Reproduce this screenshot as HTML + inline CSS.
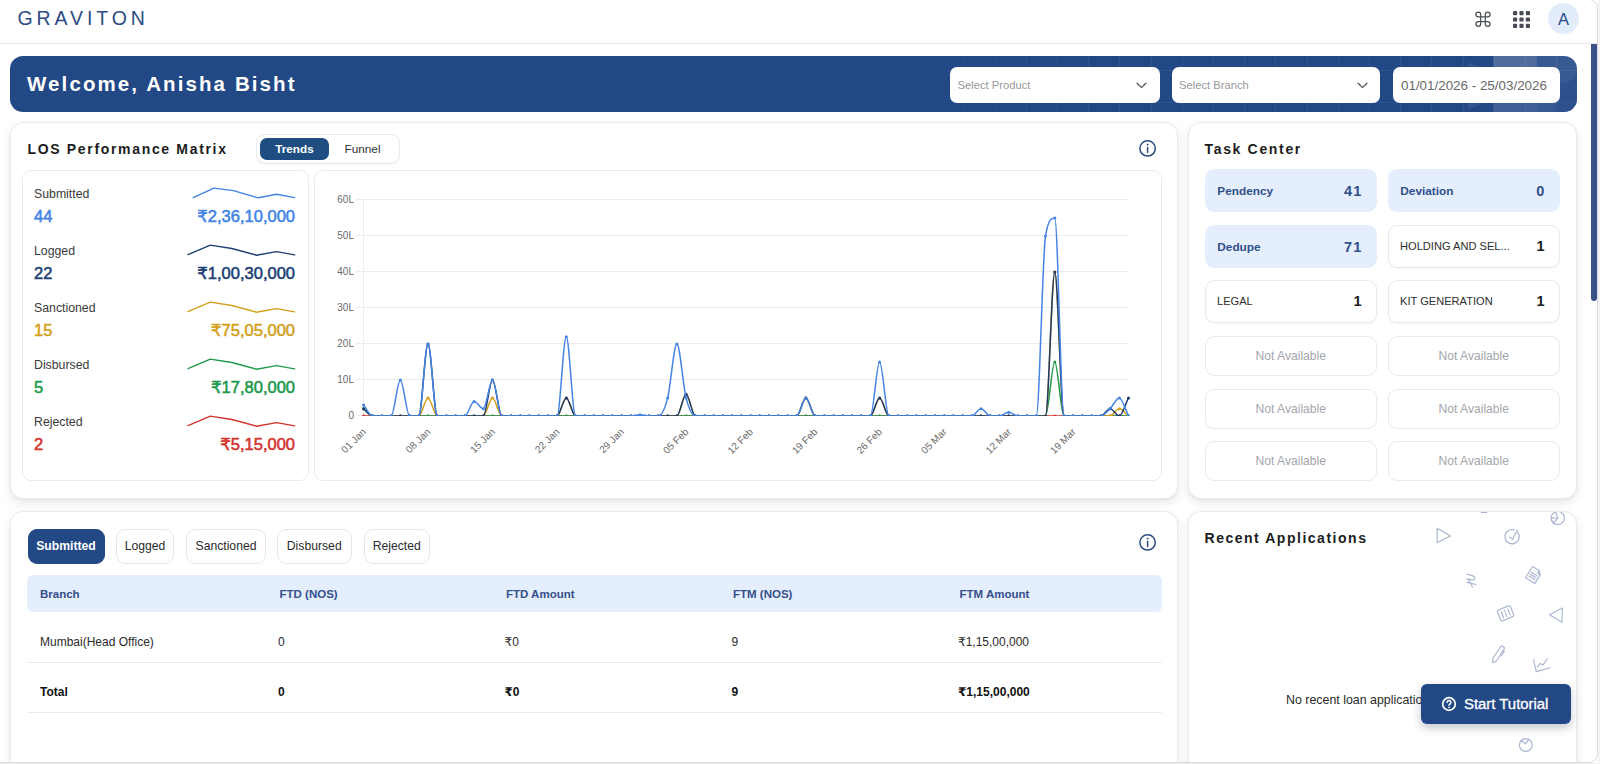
<!DOCTYPE html>
<html lang="en">
<head>
<meta charset="utf-8">
<title>Graviton Dashboard</title>
<style>
*{box-sizing:border-box;margin:0;padding:0}
html,body{width:1600px;height:764px;overflow:hidden;background:#fff;font-family:"Liberation Sans","DejaVu Sans",sans-serif;color:#222;}
.abs{position:absolute}
.rs{font-family:"DejaVu Sans",sans-serif;}
#hdr{position:absolute;left:0;top:0;width:1598px;height:44px;background:#fff;border-bottom:1px solid #e8e8ea}
#logo{position:absolute;left:17.5px;top:6px;font-size:19.5px;line-height:24px;letter-spacing:3.9px;color:#2b4c82;font-weight:400;white-space:nowrap}
#avatar{position:absolute;left:1548px;top:3px;width:31px;height:31px;border-radius:50%;background:#e3ecfb;color:#2a4a85;font-size:16.5px;line-height:33.6px;text-align:center}
#banner{position:absolute;left:10px;top:56px;width:1567px;height:56px;border-radius:13px;background:#224886;overflow:hidden}
#banner h1{position:absolute;left:17px;top:15px;font-size:20.5px;line-height:26px;font-weight:700;color:#fff;letter-spacing:2.1px;white-space:nowrap}
.sel{position:absolute;top:11px;height:36px;background:#fff;border-radius:7px;font-size:11.2px;color:#989898;line-height:37.4px;padding-left:7.6px;white-space:nowrap}
.card{position:absolute;background:#fff;border:1px solid #eaebee;border-radius:13px;box-shadow:0 4px 10px rgba(30,40,60,.10),0 1px 2px rgba(30,40,60,.05)}
.ttl{position:absolute;font-size:14px;line-height:18px;font-weight:700;letter-spacing:1.67px;color:#1c1c1c;white-space:nowrap}
.box{position:absolute;border:1px solid #e8eaee;border-radius:9px;background:#fff}
.lab{position:absolute;left:34px;font-size:12.3px;line-height:16px;color:#3a3a3a;white-space:nowrap}
.num{position:absolute;left:34px;font-size:16.5px;line-height:20px;font-weight:400;-webkit-text-stroke:.55px currentColor;white-space:nowrap}
.amt{position:absolute;right:1305px;font-size:16.5px;line-height:20px;font-weight:400;-webkit-text-stroke:.55px currentColor;white-space:nowrap;text-align:right}
.c1{color:#4384e4}.c2{color:#213f75}.c3{color:#d2a11c}.c4{color:#219a4c}.c5{color:#d3342c}
.tk{position:absolute;width:171.5px;height:43px;border-radius:9px;font-size:11.8px;line-height:43px;white-space:nowrap}
.tk.b{background:#e5eefd;color:#2f4e8a;font-weight:700;line-height:44.6px}
.tk.w{background:#fff;border:1px solid #e9eaed;color:#2e2e2e;font-size:11.1px;box-shadow:0 1px 2px rgba(0,0,0,.04)}
.tk.n{background:#fff;border:1px solid #e9eaed;color:#a3a6ab;text-align:center;height:40px;line-height:38px;font-size:12.1px}
.tk span.l{position:absolute;left:12.3px}
.tk span.r{position:absolute;right:14px;font-size:14.5px;font-weight:700;letter-spacing:1.2px}
.tk.w span.l{left:11px;top:-1px}.tk.w span.r{right:14px;top:-1px;color:#1c1c1c;letter-spacing:0}
.tab{position:absolute;top:529px;height:34.5px;border:1px solid #e6e8ec;border-radius:9px;font-size:12.2px;line-height:32.5px;text-align:center;color:#2b2b2b;background:#fff;white-space:nowrap}
.tab.on{background:#224886;border-color:#224886;color:#fff;font-weight:700}
.th{position:absolute;top:586px;font-size:11.5px;line-height:16px;font-weight:700;color:#34508a;white-space:nowrap}
.td{position:absolute;font-size:12px;line-height:16px;color:#2a2a2a;white-space:nowrap}
.td.b{font-weight:700;color:#111}
</style>
</head>
<body>
<!-- ===== header ===== -->
<div id="hdr">
  <div id="logo">GRAVITON</div>
  <svg class="abs" style="left:1474px;top:10px" width="18" height="18" viewBox="0 0 18 18" fill="none" stroke="#4a4e57" stroke-width="1.25">
    <path d="M6.7 6.9h4.6v4.6H6.700zM6.700 6.900V4.500a2.400 2.400 0 1 0-2.400 2.400zM11.300 6.900h2.400a2.400 2.400 0 1 0-2.400-2.400zM11.300 11.500v2.400a2.400 2.400 0 1 0 2.400-2.400zM6.700 11.500H4.300a2.400 2.400 0 1 0 2.400 2.400z"/>
  </svg>
  <svg class="abs" style="left:1512.8px;top:10.8px" width="17" height="17" viewBox="0 0 18 18" fill="#474b55">
    <rect x="0" y="0" width="4.4" height="4.4" rx="1"/><rect x="6.8" y="0" width="4.4" height="4.4" rx="1"/><rect x="13.6" y="0" width="4.4" height="4.4" rx="1"/>
    <rect x="0" y="6.8" width="4.4" height="4.4" rx="1"/><rect x="6.8" y="6.8" width="4.4" height="4.4" rx="1"/><rect x="13.6" y="6.8" width="4.4" height="4.4" rx="1"/>
    <rect x="0" y="13.6" width="4.4" height="4.4" rx="1"/><rect x="6.8" y="13.6" width="4.4" height="4.4" rx="1"/><rect x="13.6" y="13.6" width="4.4" height="4.4" rx="1"/>
  </svg>
  <div id="avatar">A</div>
</div>

<!-- ===== banner ===== -->
<div id="banner">
  <div class="abs" style="left:892.4px;top:0;width:690px;height:56px;opacity:.07;background:repeating-linear-gradient(90deg,transparent 0,transparent 30.2px,#fff 30.2px,#fff 31.2px),repeating-linear-gradient(180deg,transparent 0,transparent 14.4px,#fff 14.4px,#fff 15.4px,transparent 15.4px,transparent 45.8px,#fff 45.8px,#fff 46.8px,transparent 46.8px,transparent 60px);-webkit-mask-image:linear-gradient(90deg,transparent 0,#000 25%);mask-image:linear-gradient(90deg,transparent 0,#000 25%)"></div>
  <svg class="abs" style="left:1440px;top:0" width="127" height="56" viewBox="0 0 127 56">
    <path d="M18 6 L44 18 L44 42 L18 54 Z" fill="#fff" opacity=".07"/>
    <rect x="43.5" y="0" width="43.5" height="56" fill="#fff" opacity=".2"/>
    <rect x="43.5" y="28" width="43.5" height="28" fill="#224886" opacity=".35"/>
    <rect x="87" y="0" width="40" height="56" fill="#fff" opacity=".1"/>
    <path d="M110 28 Q127 26 127 12 L127 56 L104 56 Z" fill="#224886" opacity=".45"/>
  </svg>
  <h1>Welcome, Anisha Bisht</h1>
  <div class="sel" style="left:940px;width:209.5px">Select Product
    <svg class="abs" style="left:185.5px;top:14.5px" width="11" height="7.3" viewBox="0 0 12 8" fill="none" stroke="#555" stroke-width="1.4" stroke-linecap="round" stroke-linejoin="round"><path d="M1.2 1.4 6 6.2 10.8 1.4"/></svg>
  </div>
  <div class="sel" style="left:1161.5px;width:208.5px">Select Branch
    <svg class="abs" style="left:185px;top:14.5px" width="11" height="7.3" viewBox="0 0 12 8" fill="none" stroke="#555" stroke-width="1.4" stroke-linecap="round" stroke-linejoin="round"><path d="M1.2 1.4 6 6.2 10.8 1.4"/></svg>
  </div>
  <div class="sel" style="left:1382.5px;width:167.5px;font-size:13.4px;color:#686868;padding-left:8.5px;line-height:38px">01/01/2026 - 25/03/2026</div>
</div>

<!-- ===== LOS Performance Matrix ===== -->
<div class="card" style="left:10px;top:122px;width:1168px;height:376.6px"></div>
<div class="ttl" style="left:27.5px;top:140px">LOS Performance Matrix</div>
<div class="abs" style="left:256px;top:134px;width:144px;height:30px;border:1px solid #e8eaee;border-radius:9px;background:#fff;box-shadow:0 1px 2px rgba(0,0,0,.04)"></div>
<div class="abs" style="left:260px;top:138px;width:69px;height:22px;border-radius:7px;background:#1f4d82;color:#fff;font-weight:700;font-size:11.7px;line-height:22px;text-align:center">Trends</div>
<div class="abs" style="left:329px;top:138px;width:67px;height:22px;font-size:11.8px;line-height:22px;text-align:center;color:#333">Funnel</div>
<svg class="abs" style="left:1138px;top:139px" width="19" height="19" viewBox="0 0 19 19" fill="none" stroke="#2d4b82" stroke-width="1.5"><circle cx="9.6" cy="9.4" r="7.7"/><path d="M9.6 8.4v5" stroke-linecap="round"/><circle cx="9.6" cy="5.7" r=".6" fill="#2d4b82" stroke-width=".8"/></svg>

<div class="box" style="left:22px;top:169.5px;width:286.5px;height:311px"></div>
<div class="box" style="left:314px;top:169.5px;width:847.5px;height:311px"></div>

<div class="lab" style="top:186px">Submitted</div><div class="num c1" style="top:206px">44</div><div class="amt c1" style="top:206px"><span class="rs">₹</span>2,36,10,000</div>
<div class="lab" style="top:243px">Logged</div><div class="num c2" style="top:263px">22</div><div class="amt c2" style="top:263px"><span class="rs">₹</span>1,00,30,000</div>
<div class="lab" style="top:300px">Sanctioned</div><div class="num c3" style="top:320px">15</div><div class="amt c3" style="top:320px"><span class="rs">₹</span>75,05,000</div>
<div class="lab" style="top:357px">Disbursed</div><div class="num c4" style="top:377px">5</div><div class="amt c4" style="top:377px"><span class="rs">₹</span>17,80,000</div>
<div class="lab" style="top:414px">Rejected</div><div class="num c5" style="top:434px">2</div><div class="amt c5" style="top:434px"><span class="rs">₹</span>5,15,000</div>

<svg class="abs" style="left:180px;top:180px" width="125" height="260" viewBox="180 180 125 260" fill="none" stroke-width="1.4" stroke-linejoin="round" stroke-linecap="round">
  <polyline stroke="#4384e4" points="193.3,197.6 213.9,188.1 233.4,190.6 258.1,197.8 276.6,194.2 294.6,197.6"/>
  <polyline stroke="#213f75" points="188,254.6 210.3,245.1 231.9,248.5 256.4,255.2 276.6,251.6 294.6,254.9"/>
  <polyline stroke="#d2a11c" points="188,311.6 210.3,302.1 231.9,305.5 256.4,312.2 276.6,308.6 294.6,311.9"/>
  <polyline stroke="#219a4c" points="188,368.6 210.3,359.1 231.9,362.5 256.4,369.2 276.6,365.6 294.6,368.9"/>
  <polyline stroke="#d3342c" points="188,425.6 210.3,416.1 231.9,419.5 256.4,426.2 276.6,422.6 294.6,425.9"/>
</svg>

<svg class="abs" style="left:314px;top:170px" width="848" height="311" viewBox="314 170 848 311" font-family="Liberation Sans, sans-serif" font-size="10" fill="#6a6a6a"><defs><clipPath id="ca"><rect x="355" y="190" width="790" height="226.05"/></clipPath></defs>
<g stroke="#ececec" stroke-width="1" fill="none"><path d="M357 415.5H1128.5"/><path d="M357 379.5H1128.5"/><path d="M357 343.5H1128.5"/><path d="M357 307.5H1128.5"/><path d="M357 271.5H1128.5"/><path d="M357 235.5H1128.5"/><path d="M357 199.5H1128.5"/><path d="M363.5 199.5V415.5"/></g>
<text x="354" y="419.1" text-anchor="end">0</text>
<text x="354" y="383.1" text-anchor="end">10L</text>
<text x="354" y="347.1" text-anchor="end">20L</text>
<text x="354" y="311.1" text-anchor="end">30L</text>
<text x="354" y="275.1" text-anchor="end">40L</text>
<text x="354" y="239.1" text-anchor="end">50L</text>
<text x="354" y="203.1" text-anchor="end">60L</text>
<text text-anchor="end" transform="translate(364.1 430) rotate(-45)" x="0" y="3.5">01 Jan</text>
<text text-anchor="end" transform="translate(428.6 430) rotate(-45)" x="0" y="3.5">08 Jan</text>
<text text-anchor="end" transform="translate(493.1 430) rotate(-45)" x="0" y="3.5">15 Jan</text>
<text text-anchor="end" transform="translate(557.7 430) rotate(-45)" x="0" y="3.5">22 Jan</text>
<text text-anchor="end" transform="translate(622.2 430) rotate(-45)" x="0" y="3.5">29 Jan</text>
<text text-anchor="end" transform="translate(686.7 430) rotate(-45)" x="0" y="3.5">05 Feb</text>
<text text-anchor="end" transform="translate(751.2 430) rotate(-45)" x="0" y="3.5">12 Feb</text>
<text text-anchor="end" transform="translate(815.7 430) rotate(-45)" x="0" y="3.5">19 Feb</text>
<text text-anchor="end" transform="translate(880.2 430) rotate(-45)" x="0" y="3.5">26 Feb</text>
<text text-anchor="end" transform="translate(944.8 430) rotate(-45)" x="0" y="3.5">05 Mar</text>
<text text-anchor="end" transform="translate(1009.3 430) rotate(-45)" x="0" y="3.5">12 Mar</text>
<text text-anchor="end" transform="translate(1073.8 430) rotate(-45)" x="0" y="3.5">19 Mar</text>
<g clip-path="url(#ca)">
<path d="M363.5 415.9H1128.5" fill="none" stroke="#d3342c" stroke-width="1.5" stroke-linejoin="round"/>
<g fill="#d3342c"><circle cx="363.5" cy="415.9" r="1.5"/><circle cx="372.7" cy="415.9" r="1.5"/><circle cx="381.9" cy="415.9" r="1.5"/><circle cx="391.2" cy="415.9" r="1.5"/><circle cx="400.4" cy="415.9" r="1.5"/><circle cx="409.6" cy="415.9" r="1.5"/><circle cx="418.8" cy="415.9" r="1.5"/><circle cx="428.0" cy="415.9" r="1.5"/><circle cx="437.2" cy="415.9" r="1.5"/><circle cx="446.5" cy="415.9" r="1.5"/><circle cx="455.7" cy="415.9" r="1.5"/><circle cx="464.9" cy="415.9" r="1.5"/><circle cx="474.1" cy="415.9" r="1.5"/><circle cx="483.3" cy="415.9" r="1.5"/><circle cx="492.5" cy="415.9" r="1.5"/><circle cx="501.8" cy="415.9" r="1.5"/><circle cx="511.0" cy="415.9" r="1.5"/><circle cx="520.2" cy="415.9" r="1.5"/><circle cx="529.4" cy="415.9" r="1.5"/><circle cx="538.6" cy="415.9" r="1.5"/><circle cx="547.8" cy="415.9" r="1.5"/><circle cx="557.1" cy="415.9" r="1.5"/><circle cx="566.3" cy="415.9" r="1.5"/><circle cx="575.5" cy="415.9" r="1.5"/><circle cx="584.7" cy="415.9" r="1.5"/><circle cx="593.9" cy="415.9" r="1.5"/><circle cx="603.1" cy="415.9" r="1.5"/><circle cx="612.4" cy="415.9" r="1.5"/><circle cx="621.6" cy="415.9" r="1.5"/><circle cx="630.8" cy="415.9" r="1.5"/><circle cx="640.0" cy="415.9" r="1.5"/><circle cx="649.2" cy="415.9" r="1.5"/><circle cx="658.4" cy="415.9" r="1.5"/><circle cx="667.7" cy="415.9" r="1.5"/><circle cx="676.9" cy="415.9" r="1.5"/><circle cx="686.1" cy="415.9" r="1.5"/><circle cx="695.3" cy="415.9" r="1.5"/><circle cx="704.5" cy="415.9" r="1.5"/><circle cx="713.7" cy="415.9" r="1.5"/><circle cx="723.0" cy="415.9" r="1.5"/><circle cx="732.2" cy="415.9" r="1.5"/><circle cx="741.4" cy="415.9" r="1.5"/><circle cx="750.6" cy="415.9" r="1.5"/><circle cx="759.8" cy="415.9" r="1.5"/><circle cx="769.0" cy="415.9" r="1.5"/><circle cx="778.3" cy="415.9" r="1.5"/><circle cx="787.5" cy="415.9" r="1.5"/><circle cx="796.7" cy="415.9" r="1.5"/><circle cx="805.9" cy="415.9" r="1.5"/><circle cx="815.1" cy="415.9" r="1.5"/><circle cx="824.3" cy="415.9" r="1.5"/><circle cx="833.6" cy="415.9" r="1.5"/><circle cx="842.8" cy="415.9" r="1.5"/><circle cx="852.0" cy="415.9" r="1.5"/><circle cx="861.2" cy="415.9" r="1.5"/><circle cx="870.4" cy="415.9" r="1.5"/><circle cx="879.6" cy="415.9" r="1.5"/><circle cx="888.9" cy="415.9" r="1.5"/><circle cx="898.1" cy="415.9" r="1.5"/><circle cx="907.3" cy="415.9" r="1.5"/><circle cx="916.5" cy="415.9" r="1.5"/><circle cx="925.7" cy="415.9" r="1.5"/><circle cx="934.9" cy="415.9" r="1.5"/><circle cx="944.2" cy="415.9" r="1.5"/><circle cx="953.4" cy="415.9" r="1.5"/><circle cx="962.6" cy="415.9" r="1.5"/><circle cx="971.8" cy="415.9" r="1.5"/><circle cx="981.0" cy="415.9" r="1.5"/><circle cx="990.2" cy="415.9" r="1.5"/><circle cx="999.5" cy="415.9" r="1.5"/><circle cx="1008.7" cy="415.9" r="1.5"/><circle cx="1017.9" cy="415.9" r="1.5"/><circle cx="1027.1" cy="415.9" r="1.5"/><circle cx="1036.3" cy="415.9" r="1.5"/><circle cx="1045.5" cy="415.9" r="1.5"/><circle cx="1054.8" cy="415.9" r="1.5"/><circle cx="1064.0" cy="415.9" r="1.5"/><circle cx="1073.2" cy="415.9" r="1.5"/><circle cx="1082.4" cy="415.9" r="1.5"/><circle cx="1091.6" cy="415.9" r="1.5"/><circle cx="1100.8" cy="415.9" r="1.5"/><circle cx="1110.1" cy="415.9" r="1.5"/><circle cx="1119.3" cy="415.9" r="1.5"/><circle cx="1128.5" cy="415.9" r="1.5"/></g>
<path d="M363.5 408.7C366.6 411.1 369.6 415.9 372.7 415.9H1045.5C1048.6 415.9 1051.7 361.9 1054.8 361.9C1057.8 361.9 1060.9 415.9 1064.0 415.9H1128.5" fill="none" stroke="#219a4c" stroke-width="1.5" stroke-linejoin="round"/>
<g fill="#219a4c"><circle cx="363.5" cy="408.7" r="1.5"/><circle cx="372.7" cy="415.9" r="1.5"/><circle cx="381.9" cy="415.9" r="1.5"/><circle cx="391.2" cy="415.9" r="1.5"/><circle cx="400.4" cy="415.9" r="1.5"/><circle cx="409.6" cy="415.9" r="1.5"/><circle cx="418.8" cy="415.9" r="1.5"/><circle cx="428.0" cy="415.9" r="1.5"/><circle cx="437.2" cy="415.9" r="1.5"/><circle cx="446.5" cy="415.9" r="1.5"/><circle cx="455.7" cy="415.9" r="1.5"/><circle cx="464.9" cy="415.9" r="1.5"/><circle cx="474.1" cy="415.9" r="1.5"/><circle cx="483.3" cy="415.9" r="1.5"/><circle cx="492.5" cy="415.9" r="1.5"/><circle cx="501.8" cy="415.9" r="1.5"/><circle cx="511.0" cy="415.9" r="1.5"/><circle cx="520.2" cy="415.9" r="1.5"/><circle cx="529.4" cy="415.9" r="1.5"/><circle cx="538.6" cy="415.9" r="1.5"/><circle cx="547.8" cy="415.9" r="1.5"/><circle cx="557.1" cy="415.9" r="1.5"/><circle cx="566.3" cy="415.9" r="1.5"/><circle cx="575.5" cy="415.9" r="1.5"/><circle cx="584.7" cy="415.9" r="1.5"/><circle cx="593.9" cy="415.9" r="1.5"/><circle cx="603.1" cy="415.9" r="1.5"/><circle cx="612.4" cy="415.9" r="1.5"/><circle cx="621.6" cy="415.9" r="1.5"/><circle cx="630.8" cy="415.9" r="1.5"/><circle cx="640.0" cy="415.9" r="1.5"/><circle cx="649.2" cy="415.9" r="1.5"/><circle cx="658.4" cy="415.9" r="1.5"/><circle cx="667.7" cy="415.9" r="1.5"/><circle cx="676.9" cy="415.9" r="1.5"/><circle cx="686.1" cy="415.9" r="1.5"/><circle cx="695.3" cy="415.9" r="1.5"/><circle cx="704.5" cy="415.9" r="1.5"/><circle cx="713.7" cy="415.9" r="1.5"/><circle cx="723.0" cy="415.9" r="1.5"/><circle cx="732.2" cy="415.9" r="1.5"/><circle cx="741.4" cy="415.9" r="1.5"/><circle cx="750.6" cy="415.9" r="1.5"/><circle cx="759.8" cy="415.9" r="1.5"/><circle cx="769.0" cy="415.9" r="1.5"/><circle cx="778.3" cy="415.9" r="1.5"/><circle cx="787.5" cy="415.9" r="1.5"/><circle cx="796.7" cy="415.9" r="1.5"/><circle cx="805.9" cy="415.9" r="1.5"/><circle cx="815.1" cy="415.9" r="1.5"/><circle cx="824.3" cy="415.9" r="1.5"/><circle cx="833.6" cy="415.9" r="1.5"/><circle cx="842.8" cy="415.9" r="1.5"/><circle cx="852.0" cy="415.9" r="1.5"/><circle cx="861.2" cy="415.9" r="1.5"/><circle cx="870.4" cy="415.9" r="1.5"/><circle cx="879.6" cy="415.9" r="1.5"/><circle cx="888.9" cy="415.9" r="1.5"/><circle cx="898.1" cy="415.9" r="1.5"/><circle cx="907.3" cy="415.9" r="1.5"/><circle cx="916.5" cy="415.9" r="1.5"/><circle cx="925.7" cy="415.9" r="1.5"/><circle cx="934.9" cy="415.9" r="1.5"/><circle cx="944.2" cy="415.9" r="1.5"/><circle cx="953.4" cy="415.9" r="1.5"/><circle cx="962.6" cy="415.9" r="1.5"/><circle cx="971.8" cy="415.9" r="1.5"/><circle cx="981.0" cy="415.9" r="1.5"/><circle cx="990.2" cy="415.9" r="1.5"/><circle cx="999.5" cy="415.9" r="1.5"/><circle cx="1008.7" cy="415.9" r="1.5"/><circle cx="1017.9" cy="415.9" r="1.5"/><circle cx="1027.1" cy="415.9" r="1.5"/><circle cx="1036.3" cy="415.9" r="1.5"/><circle cx="1045.5" cy="415.9" r="1.5"/><circle cx="1054.8" cy="361.9" r="1.5"/><circle cx="1064.0" cy="415.9" r="1.5"/><circle cx="1073.2" cy="415.9" r="1.5"/><circle cx="1082.4" cy="415.9" r="1.5"/><circle cx="1091.6" cy="415.9" r="1.5"/><circle cx="1100.8" cy="415.9" r="1.5"/><circle cx="1110.1" cy="415.9" r="1.5"/><circle cx="1119.3" cy="415.9" r="1.5"/><circle cx="1128.5" cy="415.9" r="1.5"/></g>
<path d="M363.5 408.7C366.6 411.1 369.6 415.9 372.7 415.9H418.8C421.9 415.9 424.9 397.9 428.0 397.9C431.1 397.9 434.2 415.9 437.2 415.9H483.3C486.4 415.9 489.5 397.9 492.5 397.9C495.6 397.9 498.7 415.9 501.8 415.9H557.1C560.1 415.9 563.2 397.9 566.3 397.9C569.3 397.9 572.4 415.9 575.5 415.9H676.9C679.9 415.9 683.0 394.3 686.1 394.3C689.2 394.3 692.2 415.9 695.3 415.9H796.7C799.8 415.9 802.8 397.9 805.9 397.9C809.0 397.9 812.1 415.9 815.1 415.9H870.4C873.5 415.9 876.6 397.9 879.6 397.9C882.7 397.9 885.8 415.9 888.9 415.9H1045.5C1048.6 415.9 1051.7 271.9 1054.8 271.9C1057.8 271.9 1060.9 415.9 1064.0 415.9H1110.1C1113.1 415.9 1116.2 408.7 1119.3 408.7C1122.4 408.7 1125.4 413.5 1128.5 415.9" fill="none" stroke="#d2a11c" stroke-width="1.5" stroke-linejoin="round"/>
<g fill="#d2a11c"><circle cx="363.5" cy="408.7" r="1.5"/><circle cx="372.7" cy="415.9" r="1.5"/><circle cx="381.9" cy="415.9" r="1.5"/><circle cx="391.2" cy="415.9" r="1.5"/><circle cx="400.4" cy="415.9" r="1.5"/><circle cx="409.6" cy="415.9" r="1.5"/><circle cx="418.8" cy="415.9" r="1.5"/><circle cx="428.0" cy="397.9" r="1.5"/><circle cx="437.2" cy="415.9" r="1.5"/><circle cx="446.5" cy="415.9" r="1.5"/><circle cx="455.7" cy="415.9" r="1.5"/><circle cx="464.9" cy="415.9" r="1.5"/><circle cx="474.1" cy="415.9" r="1.5"/><circle cx="483.3" cy="415.9" r="1.5"/><circle cx="492.5" cy="397.9" r="1.5"/><circle cx="501.8" cy="415.9" r="1.5"/><circle cx="511.0" cy="415.9" r="1.5"/><circle cx="520.2" cy="415.9" r="1.5"/><circle cx="529.4" cy="415.9" r="1.5"/><circle cx="538.6" cy="415.9" r="1.5"/><circle cx="547.8" cy="415.9" r="1.5"/><circle cx="557.1" cy="415.9" r="1.5"/><circle cx="566.3" cy="397.9" r="1.5"/><circle cx="575.5" cy="415.9" r="1.5"/><circle cx="584.7" cy="415.9" r="1.5"/><circle cx="593.9" cy="415.9" r="1.5"/><circle cx="603.1" cy="415.9" r="1.5"/><circle cx="612.4" cy="415.9" r="1.5"/><circle cx="621.6" cy="415.9" r="1.5"/><circle cx="630.8" cy="415.9" r="1.5"/><circle cx="640.0" cy="415.9" r="1.5"/><circle cx="649.2" cy="415.9" r="1.5"/><circle cx="658.4" cy="415.9" r="1.5"/><circle cx="667.7" cy="415.9" r="1.5"/><circle cx="676.9" cy="415.9" r="1.5"/><circle cx="686.1" cy="394.3" r="1.5"/><circle cx="695.3" cy="415.9" r="1.5"/><circle cx="704.5" cy="415.9" r="1.5"/><circle cx="713.7" cy="415.9" r="1.5"/><circle cx="723.0" cy="415.9" r="1.5"/><circle cx="732.2" cy="415.9" r="1.5"/><circle cx="741.4" cy="415.9" r="1.5"/><circle cx="750.6" cy="415.9" r="1.5"/><circle cx="759.8" cy="415.9" r="1.5"/><circle cx="769.0" cy="415.9" r="1.5"/><circle cx="778.3" cy="415.9" r="1.5"/><circle cx="787.5" cy="415.9" r="1.5"/><circle cx="796.7" cy="415.9" r="1.5"/><circle cx="805.9" cy="397.9" r="1.5"/><circle cx="815.1" cy="415.9" r="1.5"/><circle cx="824.3" cy="415.9" r="1.5"/><circle cx="833.6" cy="415.9" r="1.5"/><circle cx="842.8" cy="415.9" r="1.5"/><circle cx="852.0" cy="415.9" r="1.5"/><circle cx="861.2" cy="415.9" r="1.5"/><circle cx="870.4" cy="415.9" r="1.5"/><circle cx="879.6" cy="397.9" r="1.5"/><circle cx="888.9" cy="415.9" r="1.5"/><circle cx="898.1" cy="415.9" r="1.5"/><circle cx="907.3" cy="415.9" r="1.5"/><circle cx="916.5" cy="415.9" r="1.5"/><circle cx="925.7" cy="415.9" r="1.5"/><circle cx="934.9" cy="415.9" r="1.5"/><circle cx="944.2" cy="415.9" r="1.5"/><circle cx="953.4" cy="415.9" r="1.5"/><circle cx="962.6" cy="415.9" r="1.5"/><circle cx="971.8" cy="415.9" r="1.5"/><circle cx="981.0" cy="415.9" r="1.5"/><circle cx="990.2" cy="415.9" r="1.5"/><circle cx="999.5" cy="415.9" r="1.5"/><circle cx="1008.7" cy="415.9" r="1.5"/><circle cx="1017.9" cy="415.9" r="1.5"/><circle cx="1027.1" cy="415.9" r="1.5"/><circle cx="1036.3" cy="415.9" r="1.5"/><circle cx="1045.5" cy="415.9" r="1.5"/><circle cx="1054.8" cy="271.9" r="1.5"/><circle cx="1064.0" cy="415.9" r="1.5"/><circle cx="1073.2" cy="415.9" r="1.5"/><circle cx="1082.4" cy="415.9" r="1.5"/><circle cx="1091.6" cy="415.9" r="1.5"/><circle cx="1100.8" cy="415.9" r="1.5"/><circle cx="1110.1" cy="415.9" r="1.5"/><circle cx="1119.3" cy="408.7" r="1.5"/><circle cx="1128.5" cy="415.9" r="1.5"/></g>
<path d="M363.5 408.7C366.6 411.1 369.6 415.9 372.7 415.9H418.8C421.9 415.9 424.9 343.9 428.0 343.9C431.1 343.9 434.2 415.9 437.2 415.9H483.3C486.4 415.9 489.5 379.9 492.5 379.9C495.6 379.9 498.7 415.9 501.8 415.9H557.1C560.1 415.9 563.2 397.9 566.3 397.9C569.3 397.9 572.4 415.9 575.5 415.9H676.9C679.9 415.9 683.0 394.3 686.1 394.3C689.2 394.3 692.2 415.9 695.3 415.9H796.7C799.8 415.9 802.8 397.9 805.9 397.9C809.0 397.9 812.1 415.9 815.1 415.9H870.4C873.5 415.9 876.6 397.9 879.6 397.9C882.7 397.9 885.8 415.9 888.9 415.9H1045.5C1048.6 415.9 1051.7 271.9 1054.8 271.9C1057.8 271.9 1060.9 415.9 1064.0 415.9H1100.8C1103.9 415.9 1107.0 408.7 1110.1 408.7C1113.1 408.7 1116.2 415.9 1119.3 415.9C1122.4 415.9 1125.4 403.9 1128.5 397.9" fill="none" stroke="#1f3a6d" stroke-width="1.5" stroke-linejoin="round"/>
<g fill="#1f3a6d"><circle cx="363.5" cy="408.7" r="1.5"/><circle cx="372.7" cy="415.9" r="1.5"/><circle cx="381.9" cy="415.9" r="1.5"/><circle cx="391.2" cy="415.9" r="1.5"/><circle cx="400.4" cy="415.9" r="1.5"/><circle cx="409.6" cy="415.9" r="1.5"/><circle cx="418.8" cy="415.9" r="1.5"/><circle cx="428.0" cy="343.9" r="1.5"/><circle cx="437.2" cy="415.9" r="1.5"/><circle cx="446.5" cy="415.9" r="1.5"/><circle cx="455.7" cy="415.9" r="1.5"/><circle cx="464.9" cy="415.9" r="1.5"/><circle cx="474.1" cy="415.9" r="1.5"/><circle cx="483.3" cy="415.9" r="1.5"/><circle cx="492.5" cy="379.9" r="1.5"/><circle cx="501.8" cy="415.9" r="1.5"/><circle cx="511.0" cy="415.9" r="1.5"/><circle cx="520.2" cy="415.9" r="1.5"/><circle cx="529.4" cy="415.9" r="1.5"/><circle cx="538.6" cy="415.9" r="1.5"/><circle cx="547.8" cy="415.9" r="1.5"/><circle cx="557.1" cy="415.9" r="1.5"/><circle cx="566.3" cy="397.9" r="1.5"/><circle cx="575.5" cy="415.9" r="1.5"/><circle cx="584.7" cy="415.9" r="1.5"/><circle cx="593.9" cy="415.9" r="1.5"/><circle cx="603.1" cy="415.9" r="1.5"/><circle cx="612.4" cy="415.9" r="1.5"/><circle cx="621.6" cy="415.9" r="1.5"/><circle cx="630.8" cy="415.9" r="1.5"/><circle cx="640.0" cy="415.9" r="1.5"/><circle cx="649.2" cy="415.9" r="1.5"/><circle cx="658.4" cy="415.9" r="1.5"/><circle cx="667.7" cy="415.9" r="1.5"/><circle cx="676.9" cy="415.9" r="1.5"/><circle cx="686.1" cy="394.3" r="1.5"/><circle cx="695.3" cy="415.9" r="1.5"/><circle cx="704.5" cy="415.9" r="1.5"/><circle cx="713.7" cy="415.9" r="1.5"/><circle cx="723.0" cy="415.9" r="1.5"/><circle cx="732.2" cy="415.9" r="1.5"/><circle cx="741.4" cy="415.9" r="1.5"/><circle cx="750.6" cy="415.9" r="1.5"/><circle cx="759.8" cy="415.9" r="1.5"/><circle cx="769.0" cy="415.9" r="1.5"/><circle cx="778.3" cy="415.9" r="1.5"/><circle cx="787.5" cy="415.9" r="1.5"/><circle cx="796.7" cy="415.9" r="1.5"/><circle cx="805.9" cy="397.9" r="1.5"/><circle cx="815.1" cy="415.9" r="1.5"/><circle cx="824.3" cy="415.9" r="1.5"/><circle cx="833.6" cy="415.9" r="1.5"/><circle cx="842.8" cy="415.9" r="1.5"/><circle cx="852.0" cy="415.9" r="1.5"/><circle cx="861.2" cy="415.9" r="1.5"/><circle cx="870.4" cy="415.9" r="1.5"/><circle cx="879.6" cy="397.9" r="1.5"/><circle cx="888.9" cy="415.9" r="1.5"/><circle cx="898.1" cy="415.9" r="1.5"/><circle cx="907.3" cy="415.9" r="1.5"/><circle cx="916.5" cy="415.9" r="1.5"/><circle cx="925.7" cy="415.9" r="1.5"/><circle cx="934.9" cy="415.9" r="1.5"/><circle cx="944.2" cy="415.9" r="1.5"/><circle cx="953.4" cy="415.9" r="1.5"/><circle cx="962.6" cy="415.9" r="1.5"/><circle cx="971.8" cy="415.9" r="1.5"/><circle cx="981.0" cy="415.9" r="1.5"/><circle cx="990.2" cy="415.9" r="1.5"/><circle cx="999.5" cy="415.9" r="1.5"/><circle cx="1008.7" cy="415.9" r="1.5"/><circle cx="1017.9" cy="415.9" r="1.5"/><circle cx="1027.1" cy="415.9" r="1.5"/><circle cx="1036.3" cy="415.9" r="1.5"/><circle cx="1045.5" cy="415.9" r="1.5"/><circle cx="1054.8" cy="271.9" r="1.5"/><circle cx="1064.0" cy="415.9" r="1.5"/><circle cx="1073.2" cy="415.9" r="1.5"/><circle cx="1082.4" cy="415.9" r="1.5"/><circle cx="1091.6" cy="415.9" r="1.5"/><circle cx="1100.8" cy="415.9" r="1.5"/><circle cx="1110.1" cy="408.7" r="1.5"/><circle cx="1119.3" cy="415.9" r="1.5"/><circle cx="1128.5" cy="397.9" r="1.5"/></g>
<path d="M363.5 405.1C366.6 408.7 369.6 415.9 372.7 415.9H391.2C394.2 415.9 397.3 379.9 400.4 379.9C403.4 379.9 406.5 415.9 409.6 415.9H418.8C421.9 415.9 424.9 343.9 428.0 343.9C431.1 343.9 434.2 415.9 437.2 415.9H464.9C468.0 415.9 471.0 401.5 474.1 401.5C477.2 401.5 480.2 408.7 483.3 408.7C486.4 408.7 489.5 379.9 492.5 379.9C495.6 379.9 498.7 415.9 501.8 415.9H557.1C560.1 415.9 563.2 336.7 566.3 336.7C569.3 336.7 572.4 415.9 575.5 415.9H630.8C633.9 415.9 636.9 414.8 640.0 414.8C643.1 414.8 646.2 415.9 649.2 415.9H658.4C661.5 415.9 664.6 409.9 667.7 397.9C670.7 385.9 673.8 343.9 676.9 343.9C679.9 343.9 683.0 385.9 686.1 397.9C689.2 409.9 692.2 415.9 695.3 415.9H796.7C799.8 415.9 802.8 397.9 805.9 397.9C809.0 397.9 812.1 415.9 815.1 415.9H870.4C873.5 415.9 876.6 361.9 879.6 361.9C882.7 361.9 885.8 415.9 888.9 415.9H971.8C974.9 415.9 978.0 408.7 981.0 408.7C984.1 408.7 987.2 415.9 990.2 415.9H999.5C1002.5 415.9 1005.6 412.3 1008.7 412.3C1011.8 412.3 1014.8 415.9 1017.9 415.9H1036.3C1039.4 415.9 1042.5 253.9 1045.5 235.9C1048.6 217.9 1051.7 217.9 1054.8 217.9C1057.8 217.9 1060.9 415.9 1064.0 415.9H1100.8C1103.9 415.9 1107.0 411.7 1110.1 408.7C1113.1 405.7 1116.2 397.9 1119.3 397.9C1122.4 397.9 1125.4 409.9 1128.5 415.9" fill="none" stroke="#4384e4" stroke-width="1.5" stroke-linejoin="round"/>
<g fill="#4384e4"><circle cx="363.5" cy="405.1" r="1.5"/><circle cx="372.7" cy="415.9" r="1.5"/><circle cx="381.9" cy="415.9" r="1.5"/><circle cx="391.2" cy="415.9" r="1.5"/><circle cx="400.4" cy="379.9" r="1.5"/><circle cx="409.6" cy="415.9" r="1.5"/><circle cx="418.8" cy="415.9" r="1.5"/><circle cx="428.0" cy="343.9" r="1.5"/><circle cx="437.2" cy="415.9" r="1.5"/><circle cx="446.5" cy="415.9" r="1.5"/><circle cx="455.7" cy="415.9" r="1.5"/><circle cx="464.9" cy="415.9" r="1.5"/><circle cx="474.1" cy="401.5" r="1.5"/><circle cx="483.3" cy="408.7" r="1.5"/><circle cx="492.5" cy="379.9" r="1.5"/><circle cx="501.8" cy="415.9" r="1.5"/><circle cx="511.0" cy="415.9" r="1.5"/><circle cx="520.2" cy="415.9" r="1.5"/><circle cx="529.4" cy="415.9" r="1.5"/><circle cx="538.6" cy="415.9" r="1.5"/><circle cx="547.8" cy="415.9" r="1.5"/><circle cx="557.1" cy="415.9" r="1.5"/><circle cx="566.3" cy="336.7" r="1.5"/><circle cx="575.5" cy="415.9" r="1.5"/><circle cx="584.7" cy="415.9" r="1.5"/><circle cx="593.9" cy="415.9" r="1.5"/><circle cx="603.1" cy="415.9" r="1.5"/><circle cx="612.4" cy="415.9" r="1.5"/><circle cx="621.6" cy="415.9" r="1.5"/><circle cx="630.8" cy="415.9" r="1.5"/><circle cx="640.0" cy="414.8" r="1.5"/><circle cx="649.2" cy="415.9" r="1.5"/><circle cx="658.4" cy="415.9" r="1.5"/><circle cx="667.7" cy="397.9" r="1.5"/><circle cx="676.9" cy="343.9" r="1.5"/><circle cx="686.1" cy="397.9" r="1.5"/><circle cx="695.3" cy="415.9" r="1.5"/><circle cx="704.5" cy="415.9" r="1.5"/><circle cx="713.7" cy="415.9" r="1.5"/><circle cx="723.0" cy="415.9" r="1.5"/><circle cx="732.2" cy="415.9" r="1.5"/><circle cx="741.4" cy="415.9" r="1.5"/><circle cx="750.6" cy="415.9" r="1.5"/><circle cx="759.8" cy="415.9" r="1.5"/><circle cx="769.0" cy="415.9" r="1.5"/><circle cx="778.3" cy="415.9" r="1.5"/><circle cx="787.5" cy="415.9" r="1.5"/><circle cx="796.7" cy="415.9" r="1.5"/><circle cx="805.9" cy="397.9" r="1.5"/><circle cx="815.1" cy="415.9" r="1.5"/><circle cx="824.3" cy="415.9" r="1.5"/><circle cx="833.6" cy="415.9" r="1.5"/><circle cx="842.8" cy="415.9" r="1.5"/><circle cx="852.0" cy="415.9" r="1.5"/><circle cx="861.2" cy="415.9" r="1.5"/><circle cx="870.4" cy="415.9" r="1.5"/><circle cx="879.6" cy="361.9" r="1.5"/><circle cx="888.9" cy="415.9" r="1.5"/><circle cx="898.1" cy="415.9" r="1.5"/><circle cx="907.3" cy="415.9" r="1.5"/><circle cx="916.5" cy="415.9" r="1.5"/><circle cx="925.7" cy="415.9" r="1.5"/><circle cx="934.9" cy="415.9" r="1.5"/><circle cx="944.2" cy="415.9" r="1.5"/><circle cx="953.4" cy="415.9" r="1.5"/><circle cx="962.6" cy="415.9" r="1.5"/><circle cx="971.8" cy="415.9" r="1.5"/><circle cx="981.0" cy="408.7" r="1.5"/><circle cx="990.2" cy="415.9" r="1.5"/><circle cx="999.5" cy="415.9" r="1.5"/><circle cx="1008.7" cy="412.3" r="1.5"/><circle cx="1017.9" cy="415.9" r="1.5"/><circle cx="1027.1" cy="415.9" r="1.5"/><circle cx="1036.3" cy="415.9" r="1.5"/><circle cx="1045.5" cy="235.9" r="1.5"/><circle cx="1054.8" cy="217.9" r="1.5"/><circle cx="1064.0" cy="415.9" r="1.5"/><circle cx="1073.2" cy="415.9" r="1.5"/><circle cx="1082.4" cy="415.9" r="1.5"/><circle cx="1091.6" cy="415.9" r="1.5"/><circle cx="1100.8" cy="415.9" r="1.5"/><circle cx="1110.1" cy="408.7" r="1.5"/><circle cx="1119.3" cy="397.9" r="1.5"/><circle cx="1128.5" cy="415.9" r="1.5"/></g>
</g></svg>

<!-- ===== Task Center ===== -->
<div class="card" style="left:1188px;top:122px;width:389px;height:376.6px"></div>
<div class="ttl" style="left:1204.5px;top:140px">Task Center</div>
<div class="tk b" style="left:1205px;top:169px"><span class="l">Pendency</span><span class="r">41</span></div>
<div class="tk b" style="left:1388px;top:169px"><span class="l">Deviation</span><span class="r">0</span></div>
<div class="tk b" style="left:1205px;top:225px"><span class="l">Dedupe</span><span class="r">71</span></div>
<div class="tk w" style="left:1388px;top:225px"><span class="l">HOLDING AND SEL...</span><span class="r">1</span></div>
<div class="tk w" style="left:1205px;top:280px"><span class="l">LEGAL</span><span class="r">1</span></div>
<div class="tk w" style="left:1388px;top:280px"><span class="l">KIT GENERATION</span><span class="r">1</span></div>
<div class="tk n" style="left:1205px;top:335.5px">Not Available</div>
<div class="tk n" style="left:1388px;top:335.5px">Not Available</div>
<div class="tk n" style="left:1205px;top:388.5px">Not Available</div>
<div class="tk n" style="left:1388px;top:388.5px">Not Available</div>
<div class="tk n" style="left:1205px;top:441px">Not Available</div>
<div class="tk n" style="left:1388px;top:441px">Not Available</div>

<!-- ===== table card ===== -->
<div class="card" style="left:10px;top:511px;width:1168px;height:300px"></div>
<div class="tab on" style="left:27.5px;width:77px">Submitted</div>
<div class="tab" style="left:116px;width:58px">Logged</div>
<div class="tab" style="left:186px;width:80px">Sanctioned</div>
<div class="tab" style="left:277px;width:74.5px">Disbursed</div>
<div class="tab" style="left:364px;width:65.5px">Rejected</div>
<svg class="abs" style="left:1138px;top:532.5px" width="19" height="19" viewBox="0 0 19 19" fill="none" stroke="#2d4b82" stroke-width="1.5"><circle cx="9.6" cy="9.4" r="7.7"/><path d="M9.6 8.4v5" stroke-linecap="round"/><circle cx="9.6" cy="5.7" r=".6" fill="#2d4b82" stroke-width=".8"/></svg>
<div class="abs" style="left:27px;top:575px;width:1134.5px;height:37px;background:#e4eefd;border-radius:6px"></div>
<div class="th" style="left:40px">Branch</div>
<div class="th" style="left:279.5px">FTD (NOS)</div>
<div class="th" style="left:506px">FTD Amount</div>
<div class="th" style="left:733px">FTM (NOS)</div>
<div class="th" style="left:959.5px">FTM Amount</div>

<div class="td" style="left:40px;top:633.5px">Mumbai(Head Office)</div>
<div class="td" style="left:278px;top:633.5px">0</div>
<div class="td" style="left:504.5px;top:633.5px"><span class="rs">₹</span>0</div>
<div class="td" style="left:731.5px;top:633.5px">9</div>
<div class="td" style="left:958px;top:633.5px"><span class="rs">₹</span>1,15,00,000</div>
<div class="abs" style="left:27px;top:662px;width:1134.5px;height:1px;background:#e9ebee"></div>
<div class="td b" style="left:40px;top:683.5px">Total</div>
<div class="td b" style="left:278px;top:683.5px">0</div>
<div class="td b" style="left:504.5px;top:683.5px"><span class="rs">₹</span>0</div>
<div class="td b" style="left:731.5px;top:683.5px">9</div>
<div class="td b" style="left:958px;top:683.5px"><span class="rs">₹</span>1,15,00,000</div>
<div class="abs" style="left:27px;top:712px;width:1134.5px;height:1px;background:#e9ebee"></div>

<!-- ===== Recent Applications ===== -->
<div class="card" style="left:1188px;top:511px;width:389px;height:300px"></div>
<div class="ttl" style="left:1204.5px;top:529px;letter-spacing:1.52px">Recent Applications</div>
<div class="abs" style="left:1286px;top:692px;font-size:12.4px;line-height:16px;color:#2a2a2a;white-space:nowrap">No recent loan applications</div>
<svg class="abs" style="left:1420px;top:512px" width="156" height="252" viewBox="1420 512 156 252" fill="none" stroke="#a9b5d1" stroke-width="1.15" stroke-linecap="round" stroke-linejoin="round">
  <path d="M1481.2 512.4h5.4"/>
  <path d="M1437.2 528.3 1450.5 535.9 1437.2 542.6Z"/>
  <path d="M1517.6 532.2a7.1 7.1 0 1 1-3.4-2.3"/><path d="M1509.9 537.2l2.7 2.1 4.7-9.2"/>
  <g transform="rotate(-18 1557.8 518)"><circle cx="1557.8" cy="518" r="6.6"/><path d="M1557.8 511.4v6.6l-5.8 3.2"/><path d="M1552 521.200a6.600 6.600 0 0 1 -0.800 -3.200" /><path d="M1557.800 518l-6.2-2.200"/></g>
  <g transform="rotate(14 1471 581)"><path d="M1465.3 575.500h6.500c2.800 0.200 2.900 3.800 0.200 4.100l-4.300 0.200 6.200 6.700"/><path d="M1467.500 583.300h9"/><path d="M1466.500 580h3"/></g>
  <g transform="rotate(32 1533.8 574.9)"><path d="M1528.300 568.400h7.800l3.200 3.200v10.100h-11z"/><path d="M1536.100 568.400v3.200h3.200"/><path d="M1530.300 574h7M1530.300 576.200h7M1530.300 578.400h7"/></g>
  <g transform="rotate(-22 1505.6 613.3)"><rect x="1498.600" y="607.500" width="14" height="11.600" rx="1.600"/><path d="M1502 610.200v6.400M1505.600 610.200v1.200M1505.600 613.200v3.400M1509.200 610.200v6.400"/></g>
  <path d="M1549.600 614.700 1562.400 607.900 1562 622.200Z"/>
  <g transform="rotate(33.500 1498 654.600)"><path d="M1495.800 647.200a2.200 2.200 0 0 1 4.400 0v13.600l-2.200 3.400-2.200-3.400z"/><path d="M1500.200 648.500l1.300 0.300v5"/></g>
  <path d="M1533.500 659.800 1536.300 671.600 1549.800 667.700"/><path d="M1537.500 666.800 1540.200 663.300 1542.800 665.100 1547.200 658.900"/>
  <circle cx="1525.800" cy="745" r="6.400"/><path d="M1520.800 740.600 1525.600 743.800 1528.800 739.400"/>
</svg>

<div class="abs" style="left:1421px;top:683.5px;width:150px;height:40.5px;border-radius:6px;background:#224886;box-shadow:0 4px 10px rgba(20,30,60,.25)"></div>
<svg class="abs" style="left:1440px;top:695px" width="18" height="18" viewBox="0 0 18 18" fill="none" stroke="#fff" stroke-width="1.7" stroke-linecap="round"><circle cx="9" cy="9" r="6.3"/><path d="M7.1 7.400a1.900 1.900 0 1 1 2.900 1.600c-.65.400-1 .750-1 1.350" stroke-width="1.500"/><circle cx="9" cy="12.300" r=".450" fill="#fff" stroke-width=".800"/></svg>
<div class="abs" style="left:1464px;top:694px;font-size:14.9px;line-height:20px;color:#fff;-webkit-text-stroke:.3px #fff;white-space:nowrap">Start Tutorial</div>

<!-- ===== scrollbar + window frame ===== -->
<div class="abs" style="left:1590px;top:44px;width:10px;height:720px;background:#fff"></div>
<div class="abs" style="left:1591px;top:44px;width:5.5px;height:257px;background:#3a5489;border-radius:0 0 3px 3px"></div>
<div class="abs" style="left:-10px;top:-1px;width:1608px;height:764px;border:1px solid #dadada;border-radius:0 9px 9px 0;pointer-events:none"></div>
<div class="abs" style="left:1598px;top:0;width:2px;height:764px;background:#f4f4f4"></div>
<div class="abs" style="left:0;top:763px;width:1600px;height:1px;background:#f0f0f0"></div>
</body>
</html>
